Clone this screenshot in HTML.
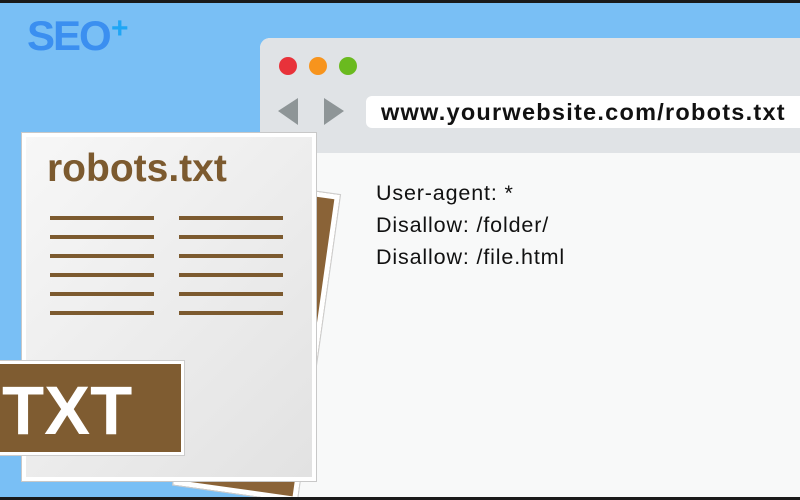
<!DOCTYPE html>
<html><head><style>
body{margin:0}
#c{position:relative;width:800px;height:500px;background:#79bff5;overflow:hidden;font-family:"Liberation Sans",sans-serif}
.bar{position:absolute;left:0;width:800px;height:3px;background:#1a1a1a}
#br{position:absolute;left:260px;top:38px;width:560px;height:470px;background:#f8f9f9;border-radius:10px 0 0 0}
#hd{position:absolute;left:0;top:0;right:0;height:115px;background:#e0e3e6;border-radius:10px 0 0 0}
.dot{position:absolute;top:19px;width:18px;height:18px;border-radius:50%}
#url{position:absolute;left:106px;top:58px;width:460px;height:32px;background:#fff;border-radius:6px;font-weight:bold;font-size:23.5px;line-height:32px;padding-left:15px;color:#111;letter-spacing:1.25px;white-space:nowrap}
.code{position:absolute;left:376px;font-size:21.5px;color:#111;letter-spacing:0.85px}
.ln{position:absolute;height:4px;background:#7c5a2f;width:104px}
</style></head><body><div id="c">
<div class="bar" style="top:0"></div>
<div style="position:absolute;left:27px;top:12px;font-weight:bold;font-size:42px;color:#3b8ff0;letter-spacing:-2px">SEO</div>
<div style="position:absolute;left:111px;top:12px;font-weight:bold;font-size:30px;color:#1fa6f5">+</div>
<div id="br"><div id="hd">
<div class="dot" style="left:19px;background:#e8323a"></div>
<div class="dot" style="left:49px;background:#f7941d"></div>
<div class="dot" style="left:79px;background:#6aba1f"></div>
<svg style="position:absolute;left:18px;top:60px" width="70" height="30"><polygon points="0,13 20,0 20,27" fill="#8e9597"/><polygon points="46,0 66,13 46,27" fill="#8e9597"/></svg>
<div id="url">www.yourwebsite.com/robots.txt</div>
</div></div>
<div class="code" style="top:181px">User-agent: *</div>
<div class="code" style="top:213px">Disallow: /folder/</div>
<div class="code" style="top:245px">Disallow: /file.html</div>
<div style="position:absolute;left:215px;top:195px;width:115px;height:300px;background:#8a6337;border:5px solid #fff;outline:1px solid #ccc;transform:rotate(8deg);transform-origin:top right"></div>
<div style="position:absolute;left:22px;top:133px;width:286px;height:340px;background:linear-gradient(135deg,#f7f7f7,#e2e2e2);border:4px solid #fff;outline:1px solid #c8c8c8"></div>
<div style="position:absolute;left:47px;top:147px;font-weight:bold;font-size:39px;color:#7c5a2f">robots.txt</div>
<div class="ln" style="left:50px;top:216px"></div><div class="ln" style="left:179px;top:216px"></div>
<div class="ln" style="left:50px;top:235px"></div><div class="ln" style="left:179px;top:235px"></div>
<div class="ln" style="left:50px;top:254px"></div><div class="ln" style="left:179px;top:254px"></div>
<div class="ln" style="left:50px;top:273px"></div><div class="ln" style="left:179px;top:273px"></div>
<div class="ln" style="left:50px;top:292px"></div><div class="ln" style="left:179px;top:292px"></div>
<div class="ln" style="left:50px;top:311px"></div><div class="ln" style="left:179px;top:311px"></div>
<div style="position:absolute;left:-5px;top:361px;width:183px;height:88px;background:#7f5c31;border:3px solid #fff;outline:1px solid #ccc"></div>
<div style="position:absolute;left:2px;top:373px;font-weight:bold;font-size:69px;color:#fff;line-height:76px">TXT</div>
<div class="bar" style="top:497px"></div>
</div></body></html>
